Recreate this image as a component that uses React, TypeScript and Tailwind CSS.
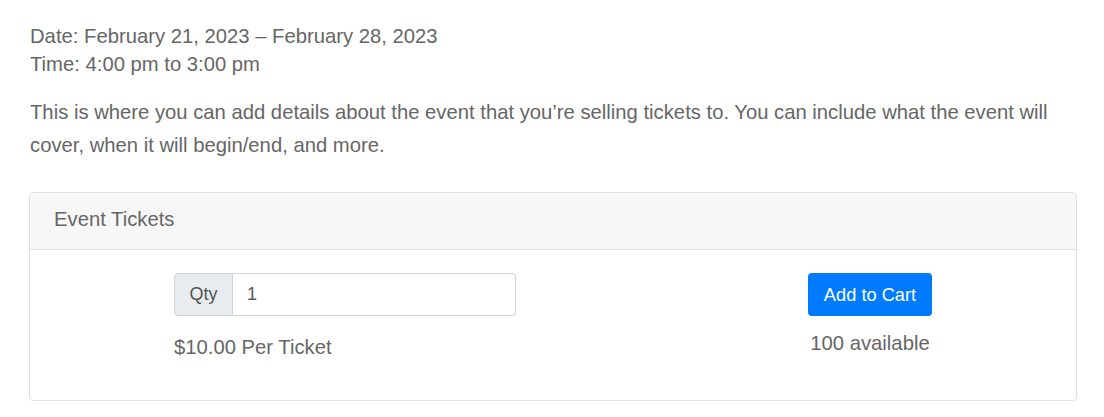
export default function App() {
  return (
    <div className="bg-white w-[1104px] h-[417px] overflow-hidden text-[#666666]" style={{ fontFamily: '"Liberation Sans", Arial, sans-serif' }}>
      <div className="px-[30px] pt-[22px]">
        <div className="text-[20.25px] leading-[28px]">
          <div>Date: February 21, 2023 – February 28, 2023</div>
          <div>Time: 4:00 pm to 3:00 pm</div>
        </div>
        <p className="mt-[18px] text-[20.25px] leading-[33px]">
          This is where you can add details about the event that you’re selling tickets to. You can include what the event will cover, when it will begin/end, and more.
        </p>
      </div>
      <div className="ml-[29px] mt-[30px] w-[1048px] h-[209px] border border-[#dfdfdf] rounded-[4px] overflow-hidden">
        <div className="h-[57px] bg-[#f7f7f7] border-b border-[#dfdfdf] flex items-center px-6 pb-[3px] text-[20.25px]">
          Event Tickets
        </div>
        <div className="flex pl-[144px] pt-[23px]">
          <div className="w-[342px] flex flex-col">
            <div className="flex h-[43px] text-[18px]">
              <div className="w-[59px] flex items-center justify-center bg-[#e9ecef] border border-[#ced4da] rounded-l-[4px] text-[#555]">Qty</div>
              <div className="flex-1 flex items-center pl-[14px] border border-l-0 border-[#ced4da] rounded-r-[4px] text-[#555]">1</div>
            </div>
            <div className="mt-[17px] text-[20.25px] leading-[28px]">$10.00 Per Ticket</div>
          </div>
          <div className="ml-[292px] w-[124px] flex flex-col items-center">
            <button className="w-[124px] h-[43px] bg-[#007bff] text-white text-[18.25px] rounded-[4px]">Add to Cart</button>
            <div className="mt-[13px] text-[20.25px] leading-[28px] whitespace-nowrap">100 available</div>
          </div>
        </div>
      </div>
    </div>
  );
}
